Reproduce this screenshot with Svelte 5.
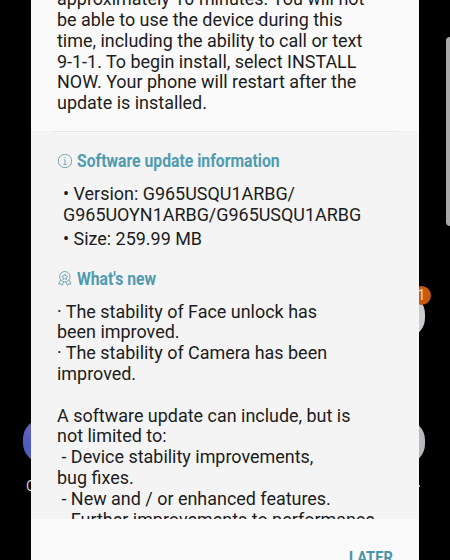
<script>
  const intro = [
    'approximately 10 minutes. You will not',
    'be able to use the device during this',
    'time, including the ability to call or text',
    '9-1-1. To begin install, select INSTALL',
    'NOW. Your phone will restart after the',
    'update is installed.'
  ];
  const news = [
    '· The stability of Face unlock has',
    'been improved.',
    '· The stability of Camera has been',
    'improved.',
    '',
    'A software update can include, but is',
    'not limited to:',
    ' - Device stability improvements,',
    'bug fixes.',
    ' - New and / or enhanced features.',
    ' - Further improvements to performance.'
  ];
</script>

<div class="screen">
  <div class="app left"></div>
  <span class="app-label">C</span>
  <div class="app upper"></div>
  <div class="badge">1</div>
  <div class="app lower"></div>
  <span class="app-dot"></span>
  <div class="edge-handle"></div>

  <main class="dialog">
    <section class="intro">
      {#each intro as line}<p>{line}</p>{/each}
    </section>
    <section class="details">
      <h2>
        <svg width="16" height="16" viewBox="0 0 16 16" fill="none" stroke="#6f9da8" stroke-width=".9">
          <circle cx="8" cy="7" r="6.7" />
          <path d="M6.7 5.8H8v4.6M6.4 10.4h3.2M7.4 3.6h1.1" />
        </svg>
        <span>Software update information</span>
      </h2>
      <div class="version">
        <p>• Version: G965USQU1ARBG/</p>
        <p>G965UOYN1ARBG/G965USQU1ARBG</p>
        <p class="size">• Size: 259.99 MB</p>
      </div>
      <h2 class="new">
        <svg width="16" height="16" viewBox="0 0 16 16" fill="none" stroke="#68a0ae" stroke-width=".9" stroke-linejoin="round">
          <circle cx="7.8" cy="5.7" r="5.2" />
          <path d="m7.8 3 .9 1.8 2 .3-1.4 1.400.3 2-1.800-.9-1.800.9.3-2-1.400-1.400 2-.3z" />
          <path d="m3.6 9-2 4 2.3-.2 1.2 1.700 1.600-3.600M12 9l2 4-2.3-.2-1.2 1.700L8.900 10.900" />
        </svg>
        <span>What's new</span>
      </h2>
      <div class="news">
        {#each news as line}<p>{line}</p>{/each}
      </div>
    </section>
    <footer><button>LATER</button></footer>
  </main>
</div>

<style>
  :global(body) { margin: 0; background: #000; }
  .screen {
    position: relative;
    display: flex;
    justify-content: center;
    width: 450px;
    height: 560px;
    overflow: hidden;
    background: #000;
    font-family: Roboto, "Liberation Sans", sans-serif;
  }
  .dialog {
    position: relative;
    display: flex;
    flex-direction: column;
    width: 388px;
    height: 560px;
    overflow: hidden;
    background: #fafafa;
    color: #1c1c1c;
    font-size: 17.96px;
    line-height: 20.8px;
  }
  p { margin: 0; height: 20.8px; white-space: pre; }
  .intro {
    display: flex;
    flex-direction: column;
    justify-content: flex-end;
    flex: none;
    box-sizing: border-box;
    height: 131px;
    padding: 0 0 17px 26px;
  }
  .details {
    flex: none;
    box-sizing: border-box;
    height: 388px;
    padding: 20px 0 0 26px;
    overflow: hidden;
    background: linear-gradient(#e5e5e5, #e5e5e5) 22px 0 / 346px 1px no-repeat #f4f4f4;
  }
  h2 {
    display: flex;
    align-items: center;
    gap: 4px;
    height: 21px;
    margin: 0;
    color: #509bb0;
    font-size: 18px;
    font-weight: 700;
    white-space: nowrap;
  }
  h2 svg { flex: none; }
  h2 span { transform: scaleX(.874); transform-origin: left; }
  .version { padding: 12.2px 0 0 6px; }
  .version .size { margin-top: 3.3px; }
  .new { margin-top: 19px; }
  .news { padding-top: 11.8px; }
  footer { display: flex; justify-content: flex-end; padding: 28px 26px 0 0; }
  button {
    padding: 0;
    border: 0;
    background: none;
    color: #4793a7;
    font: 700 17px/20px Roboto, sans-serif;
    transform: scaleX(.86);
    transform-origin: right;
  }
  .app { position: absolute; border-radius: 20px; width: 44px; height: 44px; }
  .left { left: 23px; top: 419px; background: linear-gradient(#6f62b4, #4c5cc4 60%, #5360b4); }
  .upper { right: 25px; top: 294px; background: #c8cccd; }
  .lower { right: 25px; top: 420px; background: #b9babf; }
  .app-label { position: absolute; left: 26px; top: 478px; color: #ccc; font-size: 14px; line-height: 16px; }
  .app-dot { position: absolute; left: 418px; top: 485px; width: 2px; height: 2px; background: #aaa; }
  .badge {
    position: absolute;
    left: 412px;
    top: 286px;
    width: 19px;
    height: 19px;
    border-radius: 50%;
    background: #c8590f;
    color: #f6d9c5;
    font-size: 14px;
    line-height: 19px;
    text-align: center;
  }
  .edge-handle {
    position: absolute;
    left: 446px;
    top: 37px;
    width: 12px;
    height: 189px;
    border-radius: 4px;
    background: #a9a9a9;
  }
</style>
